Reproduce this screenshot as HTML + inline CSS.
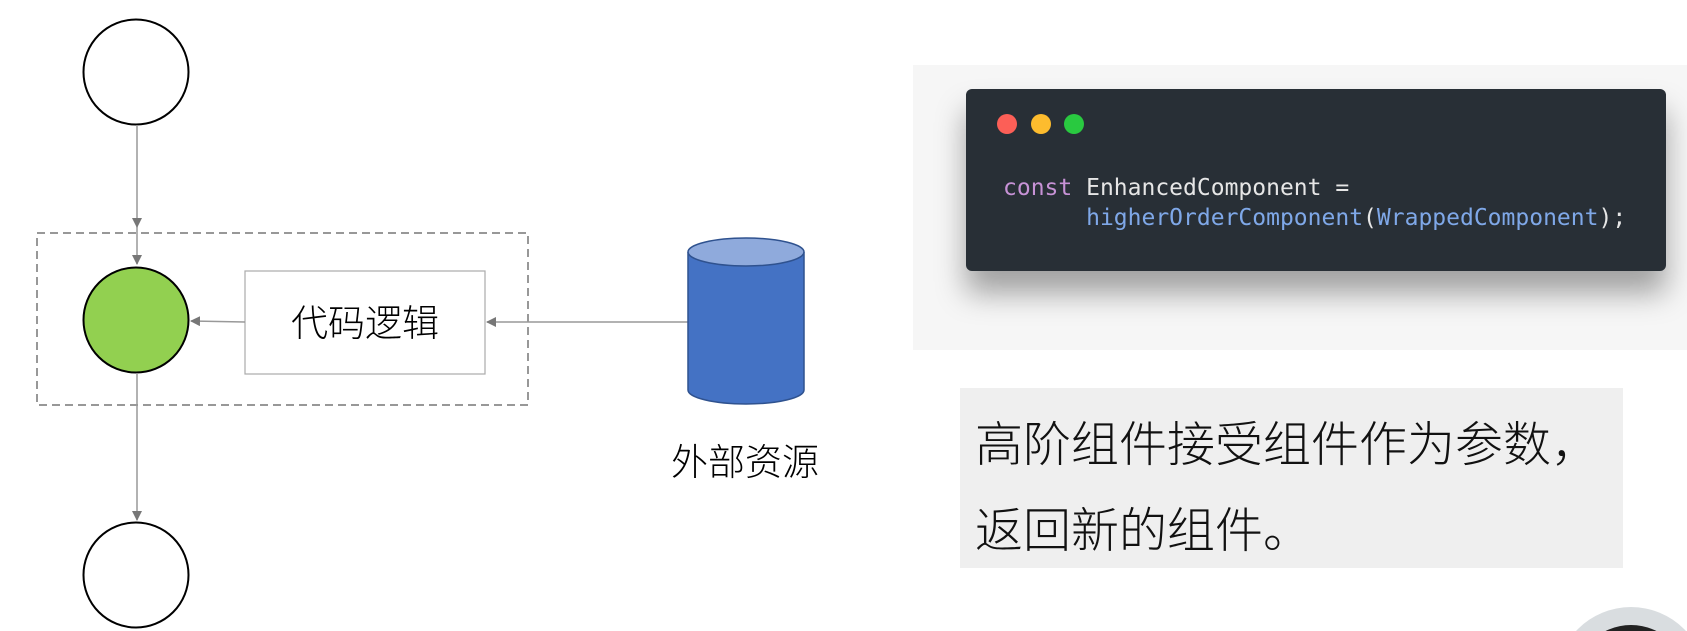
<!DOCTYPE html>
<html style="overflow:hidden;width:1687px;height:631px"><head><meta charset="utf-8"><style>
body{margin:0;width:1687px;height:631px;overflow:hidden;background:#fff;position:relative;font-family:"Liberation Sans","Noto Sans CJK SC",sans-serif}
.bg{position:absolute;left:913px;top:65px;width:774px;height:285px;background:#f6f6f6}
.panel{position:absolute;left:966px;top:89px;width:700px;height:182px;background:#282f36;border-radius:6px;box-shadow:0 22px 30px rgba(0,0,0,.35)}
.dot{position:absolute;top:114px;width:20px;height:20px;border-radius:50%}
.code{position:absolute;left:1003px;top:173px;font-family:"DejaVu Sans Mono","Liberation Mono",monospace;font-size:23px;line-height:30px;color:#e6e6e6;white-space:pre}
.box{position:absolute;left:960px;top:388px;width:663px;height:180px;background:#efefef}
.box div{position:absolute;left:15px;font-family:"Noto Sans CJK SC",sans-serif;font-weight:300;font-size:48px;color:#111;white-space:nowrap}
</style></head><body>
<svg width="900" height="631" style="position:absolute;left:0;top:0">
<defs><marker id="a" markerWidth="10" markerHeight="10" refX="9" refY="5" orient="auto" markerUnits="userSpaceOnUse"><path d="M0,0 L10,5 L0,10 z" fill="#777"/></marker></defs>
<circle cx="136" cy="72" r="52.5" fill="#fff" stroke="#000" stroke-width="2"/>
<line x1="137" y1="125" x2="137" y2="264" stroke="#999" stroke-width="1.5" marker-end="url(#a)"/>
<path d="M132,218 L142,218 L137,228z" fill="#777"/>
<rect x="37" y="233" width="491" height="172" fill="none" stroke="#777" stroke-width="1.5" stroke-dasharray="8,5"/>
<circle cx="136" cy="320" r="52.5" fill="#92d050" stroke="#000" stroke-width="2"/>
<line x1="137" y1="373" x2="137" y2="520" stroke="#999" stroke-width="1.5" marker-end="url(#a)"/>
<circle cx="136" cy="575" r="52.5" fill="#fff" stroke="#000" stroke-width="2"/>
<rect x="245" y="271" width="240" height="103" fill="#fff" stroke="#aaa" stroke-width="1.2"/>
<text x="365" y="336" text-anchor="middle" font-family="Noto Sans CJK SC,sans-serif" font-weight="300" font-size="37">代码逻辑</text>
<line x1="245" y1="322" x2="191" y2="321" stroke="#999" stroke-width="1.5" marker-end="url(#a)"/>
<line x1="688" y1="322" x2="487" y2="322" stroke="#999" stroke-width="1.5" marker-end="url(#a)"/>
<path d="M688,252 L688,390 A58,14 0 0 0 804,390 L804,252" fill="#4472c4" stroke="#2f528f" stroke-width="1.5"/>
<ellipse cx="746" cy="252" rx="58" ry="14" fill="#8faadc" stroke="#2f528f" stroke-width="1.5"/>
<text x="745" y="475" text-anchor="middle" font-family="Noto Sans CJK SC,sans-serif" font-weight="300" font-size="37">外部资源</text>
</svg>
<div class="bg"></div>
<div class="panel"></div>
<div class="dot" style="left:997px;background:#fc5f57"></div>
<div class="dot" style="left:1031px;background:#fdbc2e"></div>
<div class="dot" style="left:1064px;background:#29c940"></div>
<div class="code"><span style="color:#c792d6">const</span> EnhancedComponent =
      <span style="color:#7fa8e8">higherOrderComponent</span>(<span style="color:#7fa8e8">WrappedComponent</span>);</div>
<div class="box"><div style="top:17px">高阶组件接受组件作为参数，</div><div style="top:103px">返回新的组件。</div></div>
<svg width="140" height="30" style="position:absolute;left:1547px;top:601px">
<circle cx="84" cy="81" r="75" fill="#d9dde0"/>
<circle cx="84" cy="81" r="57" fill="#222"/>
</svg>
</body></html>
